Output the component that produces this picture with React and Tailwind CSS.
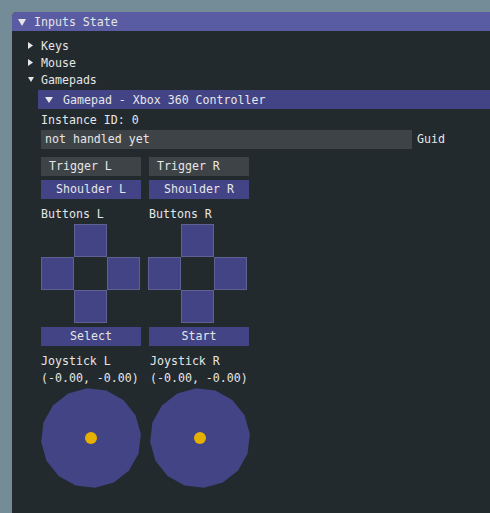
import React from "react";

const FONT = { fontFamily: '"DejaVu Sans Mono", "Liberation Mono", monospace' };

function DownTri({ w, h, className }) {
  return (
    <svg width={w} height={h} viewBox={`0 0 ${w} ${h}`} className={className}>
      <polygon points={`0,0 ${w},0 ${w / 2},${h}`} fill="#e6e6e6" />
    </svg>
  );
}

function RightTri({ w, h, className }) {
  return (
    <svg width={w} height={h} viewBox={`0 0 ${w} ${h}`} className={className}>
      <polygon points={`0,0 ${w},${h / 2} 0,${h}`} fill="#e6e6e6" />
    </svg>
  );
}

function TreeRow({ label, open }) {
  return (
    <div className="flex h-[13px] leading-[15px]">
      <span className="w-[21px] shrink-0">
        {open ? (
          <DownTri w={6} h={5} className="ml-[8px] mt-[4px]" />
        ) : (
          <RightTri w={5} h={7} className="ml-[8px] mt-[3px]" />
        )}
      </span>
      <span>{label}</span>
    </div>
  );
}

function DPad() {
  const cell = "bg-[#424485] border border-[#5f6192]";
  return (
    <div className="grid grid-cols-[33px_33px_33px] grid-rows-[33px_33px_33px] w-[99px] h-[99px]">
      <div />
      <div className={cell} />
      <div />
      <div className={cell} />
      <div />
      <div className={cell} />
      <div />
      <div className={cell} />
      <div />
    </div>
  );
}

function Joystick() {
  const n = 16;
  const pts = [];
  for (let i = 0; i < n; i++) {
    const a = (i / n) * Math.PI * 2 - 0.08;
    pts.push(`${(50 + 50 * Math.cos(a)).toFixed(2)},${(50 + 50 * Math.sin(a)).toFixed(2)}`);
  }
  return (
    <svg width="100" height="100" viewBox="0 0 100 100">
      <polygon points={pts.join(" ")} fill="#424485" />
      <circle cx="50" cy="50" r="6" fill="#e6b000" />
    </svg>
  );
}

export default function App() {
  return (
    <div
      className="w-[490px] h-[513px] bg-[#738c98] overflow-hidden pl-[12px] pt-[12px] text-[11.6px] text-[#e6e6e6]"
      style={FONT}
    >
      <div className="w-[500px] h-[520px] bg-[#222a2e] rounded-tl-[5px] overflow-hidden">
        {/* Title */}
        <div className="h-[19px] bg-[#5a5ca3] flex items-center pt-[1px] leading-[15px]">
          <span className="w-[22px] shrink-0 flex">
            <DownTri w={8} h={7} className="ml-[6px]" />
          </span>
          <span>Inputs State</span>
        </div>
        {/* Body */}
        <div className="pl-[8px] pt-[8px] flex flex-col">
          <div className="flex flex-col gap-[4px]">
            <TreeRow label="Keys" />
            <TreeRow label="Mouse" />
            <TreeRow label="Gamepads" open />
          </div>
          <div className="ml-[18px] mt-[4px] h-[19px] bg-[#424485] flex items-center pt-[1px] leading-[15px]">
            <span className="w-[25px] shrink-0 flex">
              <DownTri w={8} h={6} className="ml-[7px]" />
            </span>
            <span>Gamepad - Xbox 360 Controller</span>
          </div>
          <div className="ml-[21px] flex flex-col">
            <div className="mt-[4px] h-[13px] leading-[15px]">Instance ID: 0</div>
            <div className="mt-[4px] flex items-center">
              <div className="w-[371px] h-[19px] bg-[#3e4347] flex items-center pl-[4px] leading-[15px]">
                not handled yet
              </div>
              <span className="ml-[5px] leading-[15px]">Guid</span>
            </div>
            <div className="mt-[8px] flex gap-[8px]">
              <div className="w-[100px] h-[19px] bg-[#3e4347] flex items-center pl-[8px] leading-[15px]">
                Trigger L
              </div>
              <div className="w-[100px] h-[19px] bg-[#3e4347] flex items-center pl-[8px] leading-[15px]">
                Trigger R
              </div>
            </div>
            <div className="mt-[4px] flex gap-[8px]">
              <div className="w-[100px] h-[19px] bg-[#424485] flex items-center justify-center leading-[15px]">
                Shoulder L
              </div>
              <div className="w-[100px] h-[19px] bg-[#424485] flex items-center justify-center leading-[15px]">
                Shoulder R
              </div>
            </div>
            <div className="mt-[8px] flex gap-[8px]">
              <div className="w-[100px] h-[13px] leading-[15px]">Buttons L</div>
              <div className="w-[100px] h-[13px] leading-[15px]">Buttons R</div>
            </div>
            <div className="mt-[4px] flex">
              <DPad />
              <div className="ml-[8px]">
                <DPad />
              </div>
            </div>
            <div className="mt-[4px] flex gap-[8px]">
              <div className="w-[100px] h-[19px] bg-[#424485] flex items-center justify-center leading-[15px]">
                Select
              </div>
              <div className="w-[100px] h-[19px] bg-[#424485] flex items-center justify-center leading-[15px]">
                Start
              </div>
            </div>
            <div className="mt-[8px] flex gap-[9px]">
              <div className="w-[100px] flex flex-col gap-[4px]">
                <div className="h-[13px] leading-[15px]">Joystick L</div>
                <div className="h-[13px] leading-[15px] whitespace-nowrap">(-0.00, -0.00)</div>
                <Joystick />
              </div>
              <div className="w-[100px] flex flex-col gap-[4px]">
                <div className="h-[13px] leading-[15px]">Joystick R</div>
                <div className="h-[13px] leading-[15px] whitespace-nowrap">(-0.00, -0.00)</div>
                <Joystick />
              </div>
            </div>
          </div>
        </div>
      </div>
    </div>
  );
}
